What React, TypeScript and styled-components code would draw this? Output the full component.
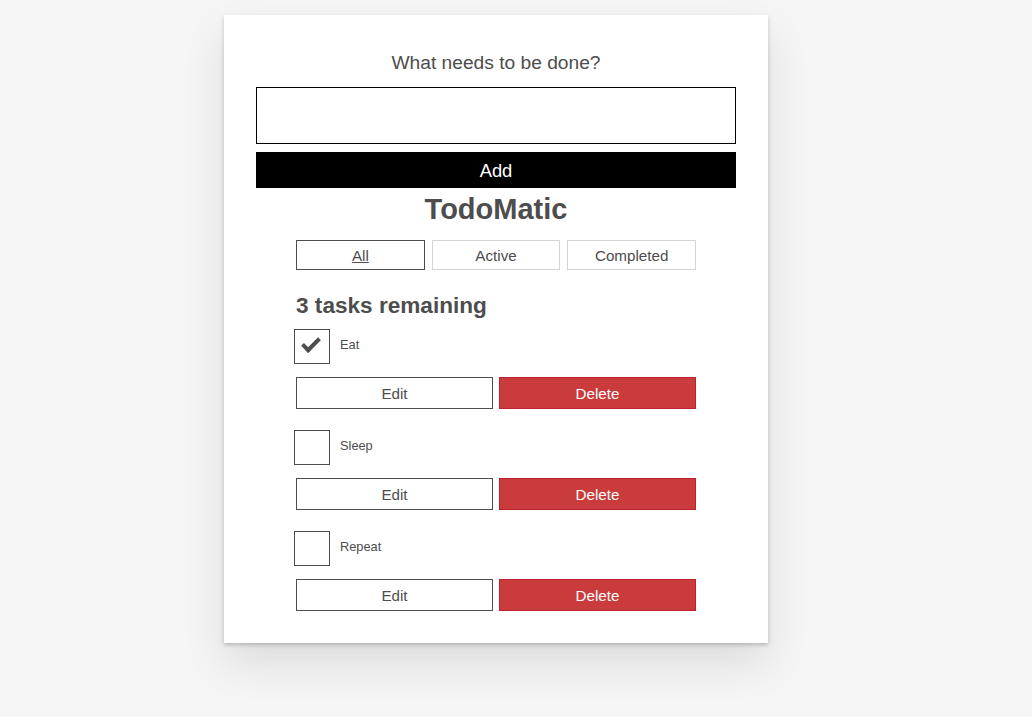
import React, { useState } from 'react'
import styled, { createGlobalStyle } from 'styled-components'

const GlobalStyle = createGlobalStyle`
	html, body {
		margin: 0;
		padding: 0;
		background-color: #f5f5f5;
	}
	body {
		color: #4d4d4d;
		font: 12.8px/1.25 'Liberation Sans', Arial, sans-serif;
	}
	* {
		box-sizing: border-box;
	}
`

const Page = styled.div`
	min-height: 100vh;
	padding: 15px 0 32px 224px;
	background-color: #f5f5f5;
`

const Card = styled.div`
	width: 544px;
	padding: 32px;
	background: #fff;
	box-shadow: 0 2px 4px 0 rgba(0, 0, 0, 0.2), 0 20px 40px 0 rgba(0, 0, 0, 0.1);
`

const Form = styled.form`
	display: flex;
	flex-direction: column;
`

const Prompt = styled.label`
	display: block;
	margin: 0 0 9px;
	padding: 6px 0;
	font-size: 19.2px;
	line-height: 19px;
	font-weight: 400;
	text-align: center;
`

const BigInput = styled.input`
	display: block;
	width: 100%;
	height: 57px;
	padding: 16px;
	border: 1px solid #000;
	border-radius: 0;
	font: inherit;
	font-size: 15.2px;
	outline: none;
`

const Button = styled.button<{ $variant?: 'primary' | 'danger' | 'filter' | 'plain'; $active?: boolean }>`
	flex: 1 1 0;
	min-width: 0;
	margin: 0;
	border: 1px solid
		${p =>
			p.$variant === 'danger'
				? '#bd2130'
				: p.$variant === 'primary'
				? '#000'
				: p.$variant === 'filter' && !p.$active
				? 'lightgrey'
				: '#4d4d4d'};
	background-color: ${p =>
		p.$variant === 'danger' ? '#ca3c3c' : p.$variant === 'primary' ? '#000' : '#fff'};
	color: ${p => (p.$variant === 'danger' || p.$variant === 'primary' ? '#fff' : '#4d4d4d')};
	font-family: 'Liberation Sans', Arial, sans-serif;
	font-size: 15.2px;
	line-height: 1;
	padding: 2px 8px 0;
	cursor: pointer;
	text-decoration: ${p => (p.$active ? 'underline' : 'none')};
	border-radius: 0;
`

const AddButton = styled(Button)`
	margin-top: 8px;
	height: 36px;
	font-size: 18.4px;
	flex: none;
`

const Title = styled.h1`
	margin: 3px 0 13px;
	font-size: 29px;
	line-height: 36px;
	font-weight: 700;
	text-align: center;
`

const Inner = styled.div`
	width: 400px;
	margin: 0 auto;
`

const ButtonRow = styled.div<{ $gap: number; $height: number }>`
	display: flex;
	gap: ${p => p.$gap}px;
	height: ${p => p.$height}px;
`

const Heading = styled.h2`
	margin: 22px 0 9px;
	font-size: 22.6px;
	line-height: 28px;
	font-weight: 700;
`

const List = styled.ul`
	list-style: none;
	margin: 0;
	padding: 0;
	display: flex;
	flex-direction: column;
	gap: 21px;
`

const Todo = styled.li`
	display: flex;
	flex-direction: column;
	gap: 13px;
`

const CheckRow = styled.label`
	display: flex;
	align-items: flex-start;
	gap: 10px;
	margin-left: -2px;
	cursor: pointer;
	input {
		position: absolute;
		opacity: 0;
		width: 0;
		height: 0;
	}
`

const Box = styled.span<{ $checked: boolean }>`
	position: relative;
	flex: none;
	width: 36px;
	height: 35px;
	border: 1px solid #4d4d4d;
	&::after {
		content: '';
		position: absolute;
		top: 8px;
		left: 7px;
		width: 14px;
		height: 6px;
		border: solid #4d4d4d;
		border-width: 0 0 4px 4px;
		transform: rotate(-45deg);
		opacity: ${p => (p.$checked ? 1 : 0)};
	}
`

const Name = styled.span`
	padding-top: 8px;
	font-size: 12.8px;
	line-height: 16px;
`

type Task = { id: string; name: string; completed: boolean }

const initial: Task[] = [
	{ id: 'todo-0', name: 'Eat', completed: true },
	{ id: 'todo-1', name: 'Sleep', completed: false },
	{ id: 'todo-2', name: 'Repeat', completed: false },
]

export default function App() {
	const [tasks, setTasks] = useState<Task[]>(initial)
	const [filter, setFilter] = useState('All')

	const toggle = (id: string) =>
		setTasks(ts => ts.map(t => (t.id === id ? { ...t, completed: !t.completed } : t)))

	return (
		<Page>
			<GlobalStyle />
			<Card>
				<Form onSubmit={e => e.preventDefault()}>
					<Prompt htmlFor="new-todo-input">What needs to be done?</Prompt>
					<BigInput id="new-todo-input" type="text" autoComplete="off" />
					<AddButton type="submit" $variant="primary">
						Add
					</AddButton>
				</Form>
				<Title>TodoMatic</Title>
				<Inner>
					<ButtonRow $gap={7} $height={30}>
						{['All', 'Active', 'Completed'].map(f => (
							<Button
								key={f}
								type="button"
								$variant="filter"
								$active={filter === f}
								onClick={() => setFilter(f)}
							>
								{f}
							</Button>
						))}
					</ButtonRow>
					<Heading>{tasks.length} tasks remaining</Heading>
					<List>
						{tasks.map(t => (
							<Todo key={t.id}>
								<CheckRow>
									<input
										type="checkbox"
										checked={t.completed}
										onChange={() => toggle(t.id)}
									/>
									<Box $checked={t.completed} />
									<Name>{t.name}</Name>
								</CheckRow>
								<ButtonRow $gap={6} $height={32}>
									<Button type="button" $variant="plain">
										Edit
									</Button>
									<Button type="button" $variant="danger">
										Delete
									</Button>
								</ButtonRow>
							</Todo>
						))}
					</List>
				</Inner>
			</Card>
		</Page>
	)
}
